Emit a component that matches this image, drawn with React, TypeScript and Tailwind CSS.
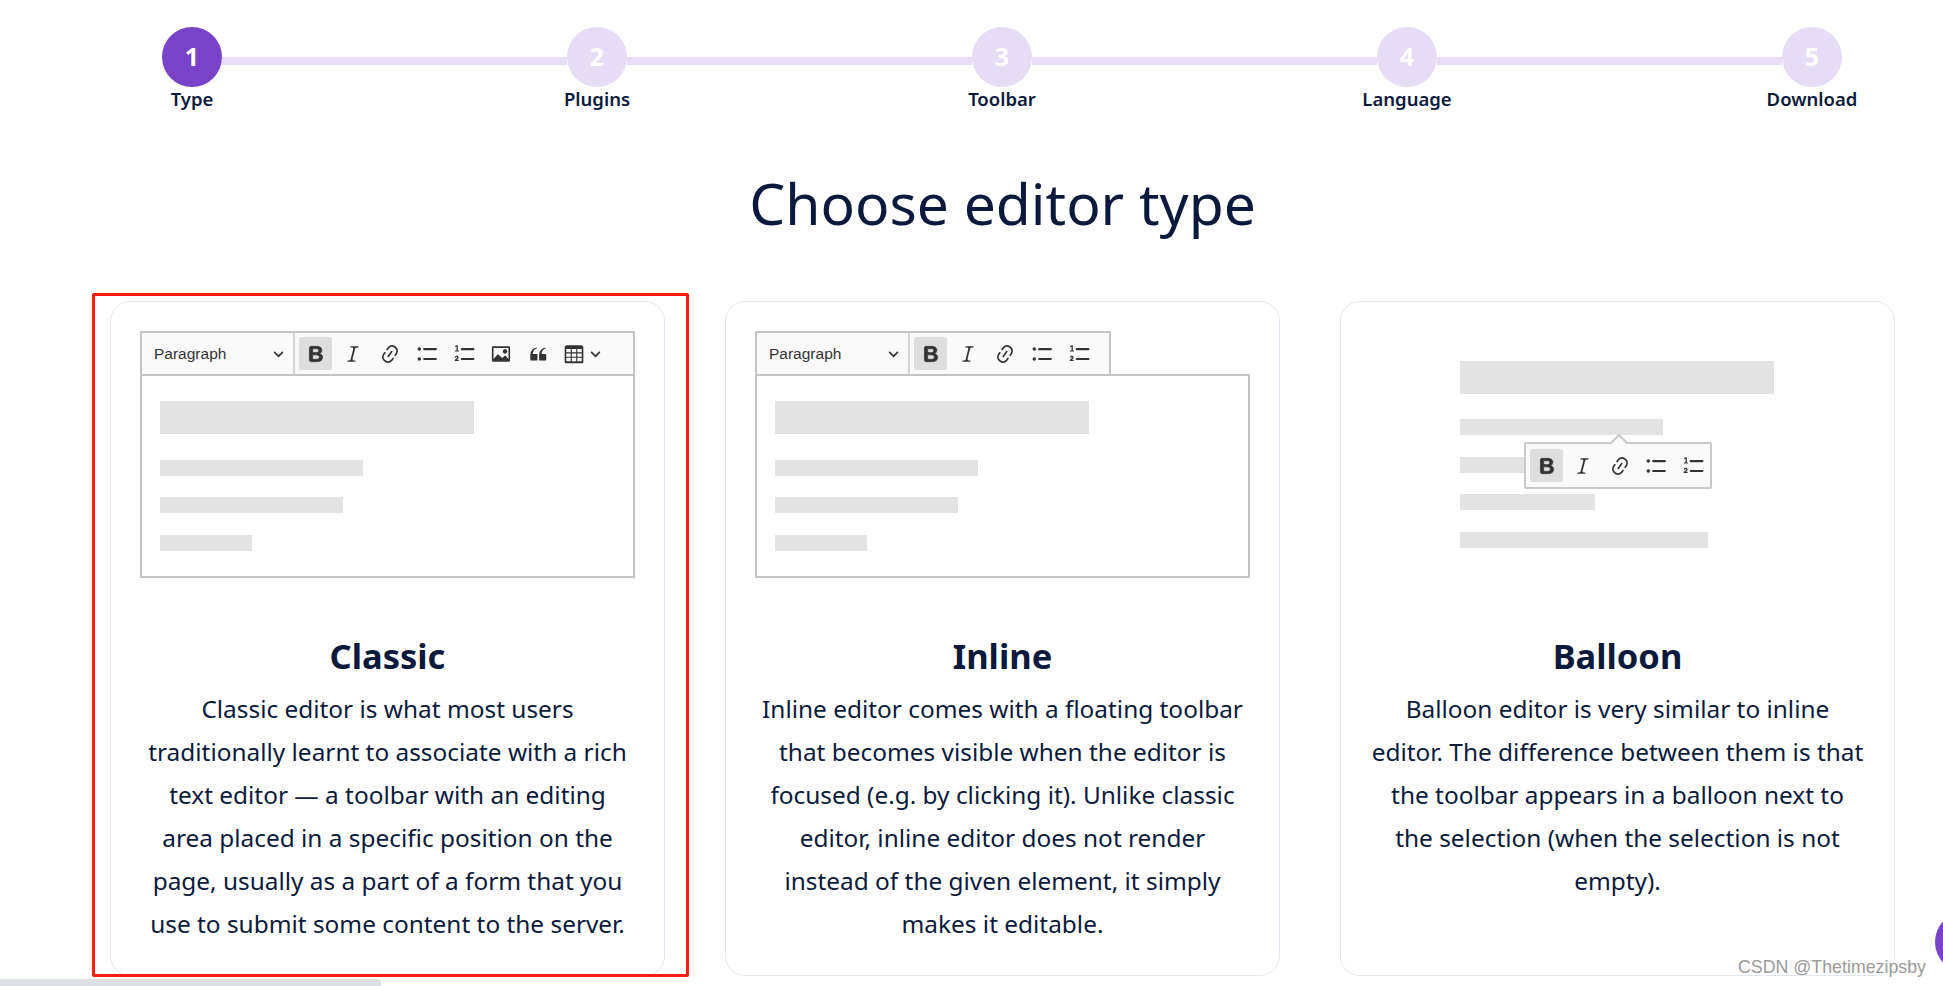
import type { ReactNode } from 'react'

const steps = ['Type', 'Plugins', 'Toolbar', 'Language', 'Download']

const paths = {
    bold: 'M10.187 17H5.773c-.637 0-1.092-.138-1.364-.415-.273-.277-.409-.718-.409-1.323V4.738c0-.617.14-1.062.419-1.332.279-.27.73-.406 1.354-.406h4.68c.69 0 1.288.041 1.793.124.506.083.96.242 1.36.478.341.197.644.447.906.75a3.262 3.262 0 0 1 .808 2.162c0 1.401-.722 2.426-2.167 3.075C15.05 10.175 16 11.315 16 13.01a3.756 3.756 0 0 1-2.296 3.504 6.1 6.1 0 0 1-1.517.377c-.571.073-1.238.11-2 .11zm-.217-6.217H7v4.087h3.069c1.977 0 2.965-.69 2.965-2.072 0-.707-.256-1.22-.768-1.537-.512-.319-1.277-.478-2.296-.478zM7 5.13v3.619h2.606c.729 0 1.292-.067 1.69-.2a1.6 1.6 0 0 0 .91-.765c.165-.267.247-.566.247-.897 0-.707-.26-1.176-.778-1.409-.519-.232-1.31-.348-2.375-.348H7z',
    italic: 'm9.586 14.633.021.004c-.036.335.095.655.393.962.082.083.173.15.274.201h1.474a.6.6 0 1 1 0 1.2H5.304a.6.6 0 0 1 0-1.2h1.15c.474-.07.809-.182 1.005-.334.157-.122.291-.32.404-.597l2.416-9.55a1.053 1.053 0 0 0-.281-.823 1.12 1.12 0 0 0-.442-.296H8.15a.6.6 0 0 1 0-1.2h6.443a.6.6 0 1 1 0 1.2h-1.195c-.376.056-.65.155-.823.296-.215.175-.423.439-.623.79l-2.366 9.347z',
    link: 'm11.077 15 .991-1.416a.75.75 0 1 1 1.229.86l-1.148 1.64a.748.748 0 0 1-.217.206 5.251 5.251 0 0 1-8.503-5.955.741.741 0 0 1 .12-.274l1.147-1.639a.75.75 0 1 1 1.228.86L4.933 10.7l.006.003a3.75 3.75 0 0 0 6.132 4.294l.006.004zm5.494-5.335a.748.748 0 0 1-.12.274l-1.147 1.639a.75.75 0 1 1-1.228-.86l.86-1.23a3.75 3.75 0 0 0-6.144-4.301l-.86 1.229a.75.75 0 0 1-1.229-.86l1.148-1.64a.748.748 0 0 1 .217-.206 5.251 5.251 0 0 1 8.503 5.955zm-4.563-2.532a.75.75 0 0 1 .184 1.045l-3.155 4.505a.75.75 0 1 1-1.229-.86l3.155-4.506a.75.75 0 0 1 1.045-.184z',
    image: 'M6.91 10.54c.26-.23.64-.21.88.03l3.36 3.14 2.23-2.06a.64.64 0 0 1 .87 0l2.52 2.97V4.5H3.2v10.12l3.71-4.08zm10.27-7.51c.6 0 1.09.47 1.09 1.05v11.84c0 .59-.49 1.06-1.09 1.06H2.79c-.6 0-1.09-.47-1.09-1.06V4.08c0-.58.49-1.05 1.1-1.05h14.38zm-5.22 5.56a1.96 1.96 0 1 1 3.4-1.96 1.96 1.96 0 0 1-3.4 1.96z',
    quote: 'M3 10.423a6.5 6.5 0 0 1 6.056-6.408l.038.67C6.448 5.423 5.354 7.663 5.22 10H9c.552 0 .5.432.5.986v4.511c0 .554-.448.503-1 .503h-5c-.552 0-.5-.449-.5-1.003v-4.574zm8 0a6.5 6.5 0 0 1 6.056-6.408l.038.67c-2.646.739-3.74 2.979-3.873 5.315H17c.552 0 .5.432.5.986v4.511c0 .554-.448.503-1 .503h-5c-.552 0-.5-.449-.5-1.003v-4.574z',
    table: 'M3 5.5v3h4v-3H3zm0 4v3h4v-3H3zm0 4v3h4v-3H3zm5 3h4v-3H8v3zm5 0h4v-3h-4v3zm4-4v-3h-4v3h4zm0-4v-3h-4v3h4zM3.5 2h13A2 2 0 0 1 18.500 4v13a1.500 1.500 0 0 1-1.500 1.500H3A1.500 1.500 0 0 1 1.500 17V4a2 2 0 0 1 2-2zM12 8.500v-3H8v3h4zm0 1H8v3h4v-3z',
}

function PathIcon({ d, heavy }: { d: string; heavy?: boolean }) {
    return (
        <svg className="w-[22px] h-[22px] text-[#333333]" viewBox="0 0 20 20" fill="currentColor" stroke={heavy ? 'currentColor' : 'none'} strokeWidth={heavy ? 0.6 : 0}>
            <path d={d} />
        </svg>
    )
}

function BulletIcon() {
    return (
        <svg className="w-[22px] h-[22px] text-[#333333]" viewBox="0 0 20 20" fill="currentColor">
            <circle cx="3" cy="5.500" r="1.600" />
            <circle cx="3" cy="14.500" r="1.600" />
            <rect x="6.500" y="4.600" width="12.500" height="1.900" rx=".9" />
            <rect x="6.500" y="13.600" width="12.500" height="1.900" rx=".9" />
        </svg>
    )
}

function NumberIcon() {
    return (
        <svg className="w-[22px] h-[22px] text-[#333333]" viewBox="0 0 20 20" fill="currentColor">
            <path d="M1.800 3.300 3.500 2.500h.9v4.800h1v1H1.700v-1h1.500V3.800l-1.200.4z" transform="translate(0 -.5)" />
            <path d="M1.600 13.100c.2-.9.9-1.400 1.800-1.400 1 0 1.700.6 1.700 1.400 0 .7-.4 1.100-1.100 1.600l-.7.500h1.900v1.100H1.500v-.9l1.900-1.500c.4-.3.500-.5.500-.7 0-.3-.2-.4-.5-.4s-.5.200-.6.600z" />
            <rect x="7" y="4.600" width="12.500" height="1.900" rx=".9" />
            <rect x="7" y="13.600" width="12.500" height="1.900" rx=".9" />
        </svg>
    )
}

function Chevron({ className }: { className: string }) {
    return (
        <svg className={className} viewBox="0 0 10 10" fill="#333333">
            <path d="M.941 4.523a.75.75 0 1 1 1.06-1.06l3.006 3.005 3.005-3.005a.75.75 0 1 1 1.06 1.06l-3.549 3.55a.75.75 0 0 1-1.168-.136L.941 4.523z" />
        </svg>
    )
}

function ToolButton({ active, children }: { active?: boolean; children: ReactNode }) {
    return (
        <span className={`flex items-center justify-center w-[33px] h-[33px] rounded-[2px] ${active ? 'bg-[#dedede]' : ''}`}>
            {children}
        </span>
    )
}

function BasicButtons() {
    return (
        <>
            <ToolButton active><PathIcon d={paths.bold} heavy /></ToolButton>
            <ToolButton><PathIcon d={paths.italic} /></ToolButton>
            <ToolButton><PathIcon d={paths.link} /></ToolButton>
            <ToolButton><BulletIcon /></ToolButton>
            <ToolButton><NumberIcon /></ToolButton>
        </>
    )
}

function Toolbar({ full }: { full?: boolean }) {
    return (
        <div className={`flex items-center h-[43px] border-2 border-b-0 border-[#c4c4c4] bg-[#fafafa] ${full ? 'w-full' : 'w-[356px]'}`}>
            <div className="flex items-center justify-between w-[153px] h-full pl-3 pr-[5px] border-r-2 border-[#d4d4d4] font-['Liberation_Sans',sans-serif] text-[15.500px] text-[#333333]">
                Paragraph
                <Chevron className="w-[11px] h-[11px] mr-[4px]" />
            </div>
            <div className="flex items-center gap-1 pl-1">
                <BasicButtons />
                {full && (
                    <>
                        <ToolButton><PathIcon d={paths.image} /></ToolButton>
                        <ToolButton><PathIcon d={paths.quote} /></ToolButton>
                        <span className="flex items-center gap-[5px] pl-[5px]">
                            <PathIcon d={paths.table} />
                            <Chevron className="w-[11px] h-[11px]" />
                        </span>
                    </>
                )}
            </div>
        </div>
    )
}

function EditorPreview({ full }: { full?: boolean }) {
    return (
        <div className="h-[245px] -mx-px -mt-px">
            <Toolbar full={full} />
            <div className="flex flex-col h-[204px] border-2 border-[#c4c4c4] pl-[18px] pt-[25px]">
                <div className="w-[314px] h-[33px] bg-[#e3e3e3]" />
                <div className="w-[203px] h-4 mt-[26px] bg-[#e3e3e3]" />
                <div className="w-[183px] h-4 mt-[21px] bg-[#e3e3e3]" />
                <div className="w-[92px] h-4 mt-[22px] bg-[#e3e3e3]" />
            </div>
        </div>
    )
}

function BalloonPreview() {
    return (
        <div className="relative w-full h-[244px] pl-[89px] pt-[29px]">
            <div className="w-[314px] h-[33px] bg-[#e3e3e3]" />
            <div className="w-[203px] h-4 mt-[25px] bg-[#e3e3e3]" />
            <div className="w-[183px] h-4 mt-[22px] bg-[#e3e3e3]" />
            <div className="w-[135px] h-4 mt-[21px] bg-[#e3e3e3]" />
            <div className="w-[248px] h-4 mt-[22px] bg-[#e3e3e3]" />

            <div className="absolute left-[153px] top-[110px] w-[188px] h-[47px] flex items-center gap-[3.500px] pl-1 border-2 border-[#c9c9c9] rounded-[2px] bg-[#fafafa]">
                <span className="absolute -top-[8px] left-[87px] w-[12px] h-[12px] rotate-45 border-l-2 border-t-2 border-[#c9c9c9] bg-[#fafafa]" />
                <BasicButtons />
            </div>
        </div>
    )
}

const cards = [
    {
        title: 'Classic',
        preview: <EditorPreview full />,
        lines: [
            'Classic editor is what most users',
            'traditionally learnt to associate with a rich',
            'text editor — a toolbar with an editing',
            'area placed in a specific position on the',
            'page, usually as a part of a form that you',
            'use to submit some content to the server.',
        ],
    },
    {
        title: 'Inline',
        preview: <EditorPreview />,
        lines: [
            'Inline editor comes with a floating toolbar',
            'that becomes visible when the editor is',
            'focused (e.g. by clicking it). Unlike classic',
            'editor, inline editor does not render',
            'instead of the given element, it simply',
            'makes it editable.',
        ],
    },
    {
        title: 'Balloon',
        preview: <BalloonPreview />,
        lines: [
            'Balloon editor is very similar to inline',
            'editor. The difference between them is that',
            'the toolbar appears in a balloon next to',
            'the selection (when the selection is not',
            'empty).',
        ],
    },
]

export default function App() {
    return (
        <div className="relative w-full h-[986px] overflow-hidden bg-white font-['Noto_Sans',sans-serif] text-[#0b1a3c]">
            {/* stepper */}
            <div className="flex pl-[162px] pr-[101px] pt-[27px]">
                {steps.map((step, i) => (
                    <div key={step} className={`flex items-center ${i < steps.length - 1 ? 'flex-1' : ''}`}>
                        <span className={`flex items-center justify-center shrink-0 w-[60px] h-[60px] rounded-full text-white text-[25px] font-bold ${i === 0 ? 'bg-[#7843c9]' : 'bg-[#e7dcf6]'}`}>
                            {i + 1}
                        </span>
                        {i < steps.length - 1 && <span className="flex-1 h-2 mt-2 bg-[#e7dcf6]" />}
                    </div>
                ))}
            </div>
            <div className="flex justify-between pl-[132px] pr-[71px]">
                {steps.map(step => (
                    <span key={step} className="w-[120px] text-center text-[18.500px] leading-6 font-semibold">{step}</span>
                ))}
            </div>

            <div className="w-[1785px] ml-[110px]">
                <h1 className="mt-[56px] text-center text-[57px] leading-[72px]">Choose editor type</h1>

                {/* editor type cards */}
                <div className="grid grid-cols-3 gap-[60px] mt-[62px]">
                    {cards.map(card => (
                        <div key={card.title} className="relative h-[675px] border border-[#e2e8f0] rounded-[20px] p-[30px] text-center">
                            {card.preview}
                            <h2 className="mt-[56px] text-[34.500px] leading-[48px] font-bold">{card.title}</h2>
                            <p className="mt-[8px] text-[24.400px] leading-[42.900px] whitespace-nowrap">
                                {card.lines.map(line => (
                                    <span key={line} className="block">{line}</span>
                                ))}
                            </p>
                            {card.title === 'Classic' && (
                                <span className="absolute -left-[19px] -top-[9px] -right-[25px] -bottom-[2px] border-[3px] border-[#ff1a0e] rounded-[2px] pointer-events-none" />
                            )}
                        </div>
                    ))}
                </div>
            </div>

            {/* page chrome caught in the screenshot */}
            <div className="absolute left-0 bottom-0 w-[381px] h-[7px] bg-[#dcdfe3] rounded-tr-[4px]" />
            <div className="absolute left-[1935px] top-[912px] w-[60px] h-[60px] rounded-full bg-[#7843c9]" />
            <span className="absolute left-[1738px] top-[957px] font-['Liberation_Sans',sans-serif] text-[17.800px] leading-5 text-[#9a9a9a]">
                CSDN @Thetimezipsby
            </span>
        </div>
    )
}
